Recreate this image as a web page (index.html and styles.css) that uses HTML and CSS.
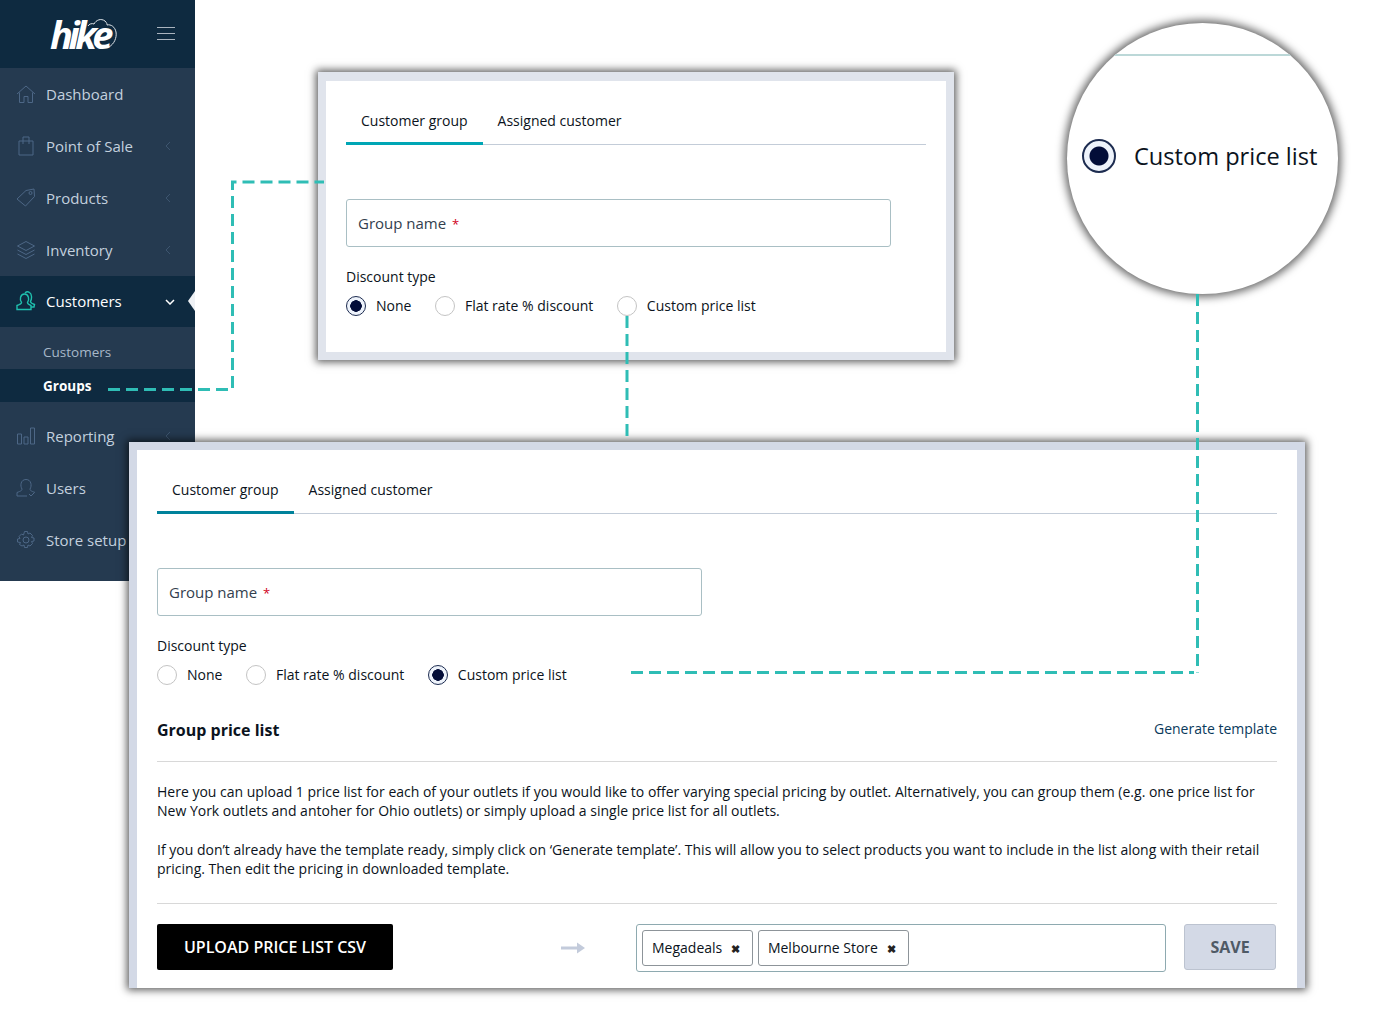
FILE: index.html
```html
<!DOCTYPE html>
<html lang="en">
<head>
    <meta charset="UTF-8">
    <title>Customer group price list</title>
    <link rel="stylesheet" href="styles.css">
</head>
<body>
<div class="canvas">

    <!-- sidebar -->
    <nav class="sidebar">
        <div class="brand">
            <span class="logo">hike
                <svg class="logo-cloud" width="34" height="34" viewBox="0 0 34 34" fill="none" stroke="#dfe5ea" stroke-width="1"><path d="M1 9c1-2 4-3 6-2 2-4 7-6 11-3 2 2 2 3 2 4 4-1 8 2 9 7 1 6-2 12-7 15"/></svg>
            </span>
            <svg class="burger" width="18" height="14" viewBox="0 0 18 14" stroke="#aab4bf" stroke-width="1"><path d="M0 .5h18M0 6.500h18M0 12.500h18"/></svg>
        </div>
        <a class="nav-item">
            <svg class="nav-icon" viewBox="0 0 20 20" fill="none" stroke="#4d6786"><path d="M1 10 10 2l9 8M3.500 8.500V18.500h4.500v-6h4v6h4.500V8.500"/></svg>
            Dashboard
        </a>
        <a class="nav-item">
            <svg class="nav-icon" viewBox="0 0 20 20" fill="none" stroke="#4d6786"><path d="M3 5h14v14H3zM7 8V1h6v7"/></svg>
            Point of Sale
            <svg class="caret" width="6" height="10" viewBox="0 0 6 10" fill="none" stroke="#3d556f"><path d="M5 1 1 5l4 4"/></svg>
        </a>
        <a class="nav-item">
            <svg class="nav-icon" viewBox="0 0 20 20" fill="none" stroke="#4d6786"><path d="M1 11 10 2.500l8-1.500.5 7.500-9 9.500z"/><circle cx="14.500" cy="5" r="1.500"/></svg>
            Products
            <svg class="caret" width="6" height="10" viewBox="0 0 6 10" fill="none" stroke="#3d556f"><path d="M5 1 1 5l4 4"/></svg>
        </a>
        <a class="nav-item">
            <svg class="nav-icon" viewBox="0 0 20 20" fill="none" stroke="#4d6786"><path d="M10 1.500 18.500 6 10 10.500 1.500 6zM1.500 10 10 14.500 18.500 10M1.500 14 10 18.500 18.500 14"/></svg>
            Inventory
            <svg class="caret" width="6" height="10" viewBox="0 0 6 10" fill="none" stroke="#3d556f"><path d="M5 1 1 5l4 4"/></svg>
        </a>
        <a class="nav-item active">
            <svg class="nav-icon" viewBox="0 0 20 20" fill="none" stroke="#1fc0ae" stroke-width="1.400"><path d="M5.500 11.500C3.500 9 4 3 8.500 3s5 6 3 8.500c0 1.500 1 2 3.500 3v4H1v-4c3-1 4.500-1.500 4.500-3z"/><path d="M9 2c1-1 3-1.500 4.500-.5 2.500 1.500 2.500 6 1 9 0 1.500 1 2 4 3l-.5 2.500h-3"/></svg>
            Customers
            <svg class="caret" width="10" height="6" viewBox="0 0 10 6" fill="none" stroke="#fff" stroke-width="1.500"><path d="m1 1 4 4 4-4"/></svg>
            <span class="notch"></span>
        </a>
        <div class="submenu">
            <a class="sub-item">Customers</a>
            <a class="sub-item current">Groups</a>
        </div>
        <a class="nav-item after-sub">
            <svg class="nav-icon" viewBox="0 0 20 20" fill="none" stroke="#4d6786"><path d="M1.500 8h4v10h-4zM8 11h4v7H8zM14.500 2h4v16h-4z"/></svg>
            Reporting
            <svg class="caret" width="6" height="10" viewBox="0 0 6 10" fill="none" stroke="#3d556f"><path d="M5 1 1 5l4 4"/></svg>
        </a>
        <a class="nav-item">
            <svg class="nav-icon" viewBox="0 0 20 20" fill="none" stroke="#4d6786"><path d="M6 11C4 8 4.500 1.500 10 1.500S16 8 14 11c0 1.500 1 2 5 3.500M11 18H1v-3.500C5 13 6 12.500 6 11M13 16l2 2 3-3"/></svg>
            Users
        </a>
        <a class="nav-item">
            <svg class="nav-icon" viewBox="0 0 20 20" fill="none" stroke="#4d6786"><circle cx="10" cy="10" r="3"/><path d="M8.500 1.500h3l.5 2.500 2-1 2.500 2.500-1 2 2.500.5v3l-2.500.5 1 2-2.500 2.500-2-1-.5 2.500h-3l-.5-2.500-2 1L3.500 14.500l1-2L1.500 12V9l2.500-.5-1-2L5.500 4l2 1z"/></svg>
            Store setup
        </a>
    </nav>

    <!-- small form -->
    <section class="panel panel-small">
        <div class="panel-body">
            <div class="tabs">
                <span class="tab selected">Customer group</span>
                <span class="tab">Assigned customer</span>
            </div>
            <div class="field">Group name <span class="req">*</span></div>
            <div class="label">Discount type</div>
            <div class="radios">
                <span class="radio checked"></span><span class="radio-text">None</span>
                <span class="radio"></span><span class="radio-text">Flat rate % discount</span>
                <span class="radio"></span><span class="radio-text">Custom price list</span>
            </div>
        </div>
    </section>

    <!-- full form -->
    <section class="panel panel-large">
        <div class="panel-body">
            <div class="tabs">
                <span class="tab selected">Customer group</span>
                <span class="tab">Assigned customer</span>
            </div>
            <div class="field">Group name <span class="req">*</span></div>
            <div class="label">Discount type</div>
            <div class="radios">
                <span class="radio"></span><span class="radio-text">None</span>
                <span class="radio"></span><span class="radio-text">Flat rate % discount</span>
                <span class="radio checked"></span><span class="radio-text">Custom price list</span>
            </div>
            <div class="list-head">
                <h2>Group price list</h2>
                <a class="template-link">Generate template</a>
            </div>
            <div class="list-copy">
                <p>Here you can upload 1 price list for each of your outlets if you would like to offer varying special pricing by outlet. Alternatively, you can group them (e.g. one price list for New York outlets and antoher for Ohio outlets) or simply upload a single price list for all outlets.</p>
                <p>If you don’t already have the template ready, simply click on ‘Generate template’. This will allow you to select products you want to include in the list along with their retail pricing. Then edit the pricing in downloaded template.</p>
            </div>
            <div class="actions">
                <button class="btn-upload">UPLOAD PRICE LIST CSV</button>
                <svg class="arrow" width="24" height="12" viewBox="0 0 24 12" fill="#c3cbdb"><path d="M0 4.500h16V.5l8 5.500-8 5.500v-4H0z"/></svg>
                <div class="outlets">
                    <span class="chip">Megadeals <b>✖</b></span>
                    <span class="chip">Melbourne Store <b>✖</b></span>
                </div>
                <button class="btn-save">SAVE</button>
            </div>
        </div>
    </section>

    <!-- magnifier -->
    <div class="lens">
        <span class="lens-line"></span>
        <span class="radio checked lens-radio"></span>
        <span class="lens-text">Custom price list</span>
    </div>

    <!-- dashed connectors -->
    <svg class="connectors" width="1400" height="1032" fill="none" stroke="#2fbdb5" stroke-width="3" stroke-dasharray="12 6">
        <path d="M108 389.500H229"/>
        <path d="M232.500 388V182H324"/>
        <path d="M627 316V437"/>
        <path d="M631 672.500H1194"/>
        <path d="M1197.500 294V672.500"/>
    </svg>
</div>
</body>
</html>
```

FILE: styles.css
```css
* {
    box-sizing: border-box;
}
body {
    margin: 0;
    background-color: #fff;
    font-family: "Open Sans", "Liberation Sans", sans-serif;
    font-size: 14px;
    color: #0b1320;
}
.canvas {
    position: relative;
    width: 1400px;
    height: 1032px;
    overflow: hidden;
}

/* sidebar */
.sidebar {
    width: 195px;
    height: 581px;
    background-color: #253a50;
}
.brand {
    display: flex;
    align-items: center;
    height: 68px;
    padding-left: 50px;
    background-color: #0e2a40;
}
.logo {
    position: relative;
    width: 107px;
    font-size: 38px;
    line-height: 68px;
    font-weight: 700;
    font-style: italic;
    letter-spacing: -4.500px;
    color: #fff;
}
.logo-cloud {
    position: absolute;
    left: 37px;
    top: 17px;
}
.nav-item {
    position: relative;
    display: flex;
    align-items: center;
    height: 52px;
    padding-left: 16px;
    font-size: 15px;
    color: #c3d0de;
}
.nav-item.after-sub {
    margin-top: 8px;
}
.nav-icon {
    flex: none;
    width: 20px;
    height: 20px;
    margin-right: 10px;
}
.caret {
    position: absolute;
    left: 165px;
    top: 21px;
}
.nav-item.active {
    height: 51px;
    padding-bottom: 1px;
    background-color: #0e2a40;
    color: #fff;
}
.nav-item.active .caret {
    top: 23px;
}
.notch {
    position: absolute;
    right: 0;
    top: 15px;
    border: 10px solid transparent;
    border-left: 0;
    border-right: 7px solid #eef1f5;
}
.submenu {
    height: 75px;
    padding-top: 8px;
    font-size: 13.500px;
    color: #a7b8c9;
}
.sub-item {
    display: block;
    height: 34px;
    padding-left: 43px;
    line-height: 34px;
}
.sub-item.current {
    height: 33px;
    background-color: #0e2a40;
    font-weight: 700;
    color: #fff;
}

/* panels */
.panel {
    position: absolute;
    border: 8px solid #e0e4ec;
    background-color: #fff;
    box-shadow: 0 0 8px 2px rgba(0, 0, 0, 0.65);
}
.panel-small {
    left: 318px;
    top: 72px;
    width: 636px;
    height: 288px;
    border-top-width: 9px;
}
.panel-large {
    left: 129px;
    top: 442px;
    width: 1176px;
    height: 546px;
    border-color: #d3d9e6;
    border-bottom: 0;
}
.panel-body {
    padding: 20px 20px 0;
}
.tabs {
    display: flex;
    height: 44px;
    border-bottom: 1px solid #c3ccd8;
}
.tab {
    height: 44px;
    padding: 10px 15px 0;
}
.tab.selected {
    border-bottom: 3px solid #00a6b5;
}
.panel-large .tab.selected {
    border-bottom-color: #00829b;
}
.field {
    width: 545px;
    height: 48px;
    margin-top: 54px;
    padding-left: 11px;
    border: 1px solid #a9bfc4;
    border-radius: 3px;
    font-size: 15px;
    line-height: 46px;
    color: #33404e;
}
.req {
    margin-left: 2px;
    font-size: 13px;
    color: #d0021b;
}
.label {
    margin-top: 20px;
}
.radios {
    display: flex;
    align-items: center;
    margin-top: 8px;
}
.radio {
    flex: none;
    width: 20px;
    height: 20px;
    margin-top: 2px;
    border: 1px solid #c4c4c4;
    border-radius: 50%;
    background-color: #fff;
}
.radio.checked {
    border: 1.500px solid #1d2c50;
    background-color: #eef3fb;
    background-image: radial-gradient(circle, #030d38 0, #030d38 5.500px, transparent 6px);
}
.radio-text {
    margin: 0 23.500px 0 10px;
}

/* price list */
.list-head {
    display: flex;
    justify-content: space-between;
    align-items: center;
    height: 61px;
    margin-top: 16px;
    padding-bottom: 3px;
    border-bottom: 1px solid #d8d8d8;
}
.list-head h2 {
    margin: 0;
    font-size: 16px;
    font-weight: 700;
}
.template-link {
    margin-top: -2px;
    color: #0a3a5c;
}
.list-copy {
    height: 142px;
    padding-top: 20px;
    border-bottom: 1px solid #d8d8d8;
    line-height: 19px;
}
.list-copy p {
    margin: 0 0 20px;
}
.actions {
    display: flex;
    align-items: flex-start;
    padding-top: 20px;
}
.btn-upload {
    width: 236px;
    height: 46px;
    border: 0;
    border-radius: 2px;
    background-color: #000;
    font-family: inherit;
    font-size: 16px;
    font-weight: 600;
    color: #fff;
}
.arrow {
    margin: 18px 51px 0 168px;
}
.outlets {
    display: flex;
    gap: 5px;
    width: 530px;
    height: 48px;
    padding: 5px;
    border: 1px solid #8eaab0;
    border-radius: 3px;
}
.chip {
    height: 36px;
    padding: 0 12px 0 9px;
    border: 1px solid #8d9499;
    border-radius: 3px;
    line-height: 34px;
}
.chip b {
    margin-left: 5px;
    font-size: 11px;
    color: #222;
}
.btn-save {
    width: 92px;
    height: 46px;
    margin-left: 18px;
    border: 1px solid #bcc3d0;
    border-radius: 3px;
    background-color: #d3d9e6;
    font-family: inherit;
    font-size: 16px;
    font-weight: 700;
    color: #4f5a66;
}

/* magnifier */
.lens {
    position: absolute;
    left: 1067px;
    top: 23px;
    width: 271px;
    height: 271px;
    overflow: hidden;
    border-radius: 50%;
    background-color: #fff;
    box-shadow: 0 0 9px 3px rgba(0, 0, 0, 0.6);
}
.lens-line {
    position: absolute;
    left: 0;
    right: 0;
    top: 31px;
    height: 2px;
    background-color: #bcd8d8;
}
.radio.lens-radio {
    position: absolute;
    left: 15px;
    top: 116px;
    width: 34px;
    height: 34px;
    margin: 0;
    border-width: 2px;
    background-image: radial-gradient(circle, #030d38 0, #030d38 9px, transparent 10px);
}
.lens-text {
    position: absolute;
    left: 67px;
    top: 117px;
    font-size: 23.600px;
    color: #0b1320;
}

.connectors {
    position: absolute;
    left: 0;
    top: 0;
}
```
